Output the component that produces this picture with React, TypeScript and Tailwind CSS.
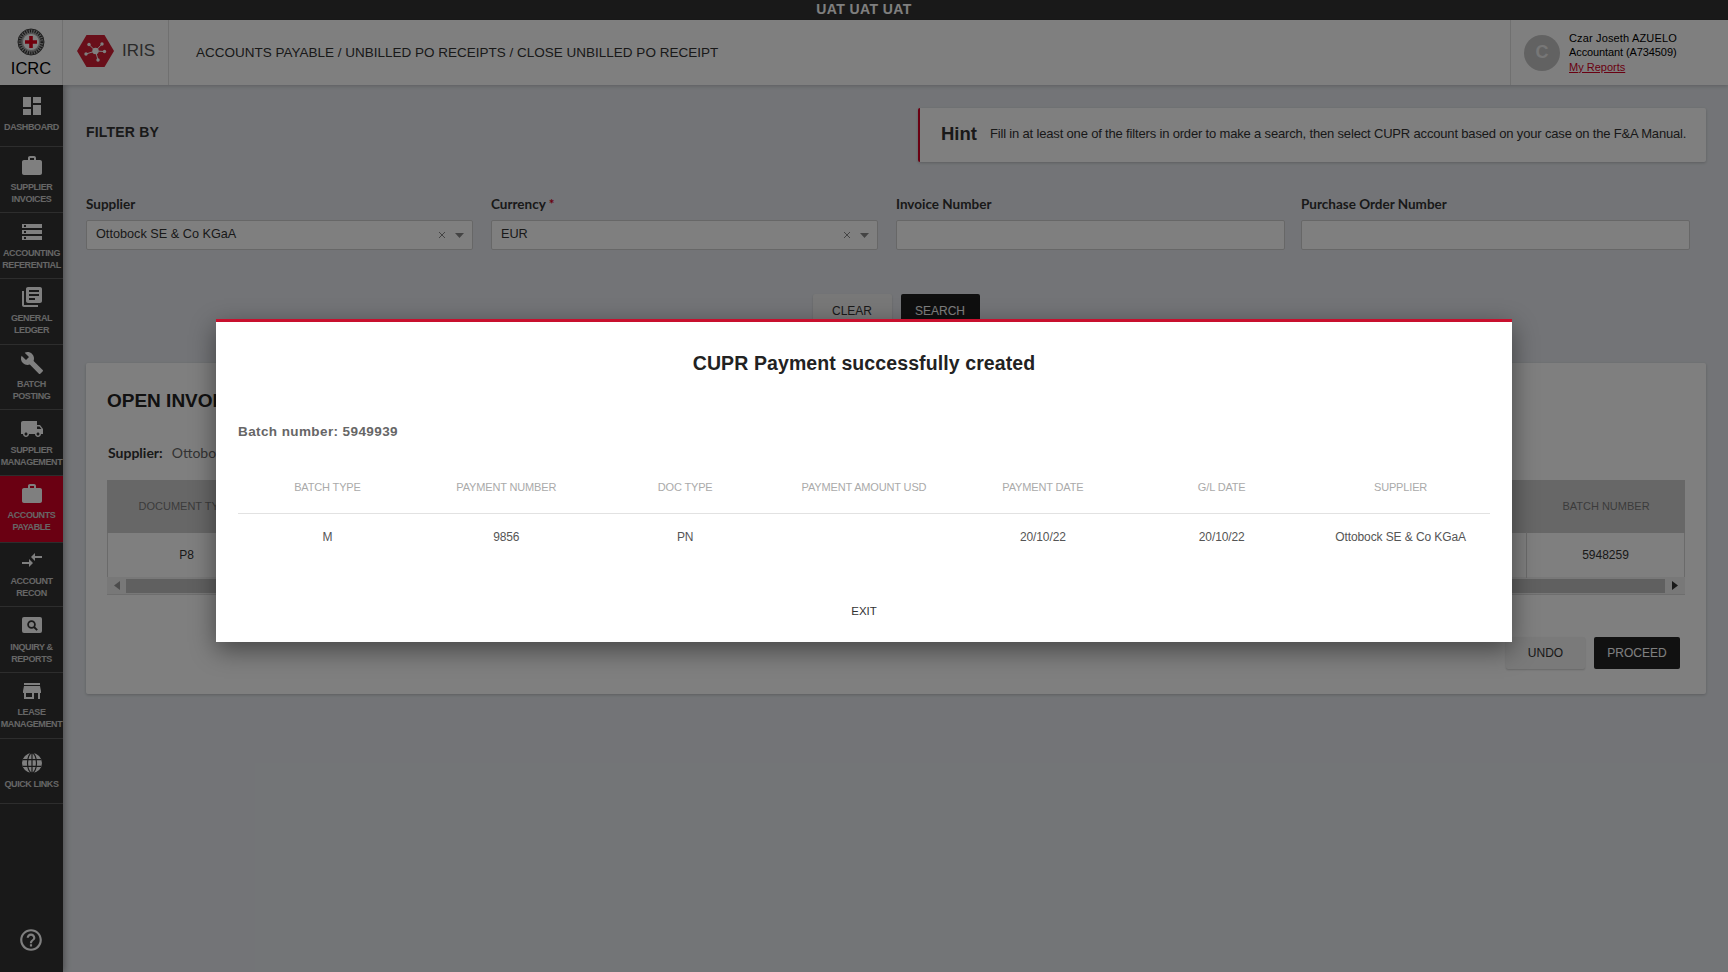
import React from "react";

const P = {
  dash: "M3 13h8V3H3v10zm0 8h8v-6H3v6zm10 0h8V11h-8v10zm0-18v6h8V3h-8z",
  work: "M20 6h-4V4c0-1.11-.89-2-2-2h-4c-1.11 0-2 .89-2 2v2H4c-1.11 0-1.99.89-1.99 2L2 19c0 1.11.89 2 2 2h16c1.11 0 2-.89 2-2V8c0-1.11-.89-2-2-2zm-6 0h-4V4h4v2z",
  storage: "M2 20h20v-4H2v4zm2-3h2v2H4v-2zM2 4v4h20V4H2zm4 3H4V5h2v2zm-4 7h20v-4H2v4zm2-3h2v2H4v-2z",
  books: "M4 6H2v14c0 1.1.9 2 2 2h14v-2H4V6zm16-4H8c-1.1 0-2 .9-2 2v12c0 1.1.9 2 2 2h12c1.1 0 2-.9 2-2V4c0-1.1-.9-2-2-2zm-1 9H9V9h10v2zm-4 4H9v-2h6v2zm4-8H9V5h10v2z",
  build: "M22.7 19l-9.1-9.1c.9-2.3.4-5-1.5-6.9-2-2-5-2.4-7.4-1.3L9 6 6 9 1.6 4.7C.4 7.1.9 10.1 2.9 12.1c1.9 1.9 4.6 2.4 6.9 1.5l9.1 9.1c.4.4 1 .4 1.4 0l2.3-2.3c.5-.4.5-1.1.1-1.4z",
  truck: "M20 8h-3V4H3c-1.1 0-2 .9-2 2v11h2c0 1.66 1.34 3 3 3s3-1.34 3-3h6c0 1.66 1.34 3 3 3s3-1.34 3-3h2v-5l-3-4zM6 18.5c-.83 0-1.5-.67-1.5-1.5s.67-1.5 1.5-1.5 1.5.67 1.5 1.5-.67 1.5-1.5 1.5zm13.5-9l1.96 2.5H17V9.5h2.5zm-1.5 9c-.83 0-1.5-.67-1.5-1.5s.67-1.5 1.5-1.5 1.5.67 1.5 1.5-.67 1.5-1.5 1.5z",
  compare: "M9.01 14H2v2h7.01v3L13 15l-3.99-4v3zm5.98-1v-3H22V8h-7.01V5L11 9l3.99 4z",
  store: "M20 4H4v2h16V4zm1 10v-2l-1-5H4l-1 5v2h1v6h10v-6h4v6h2v-6h1zm-9 4H6v-4h6v4z",
  help: "M11 18h2v-2h-2v2zm1-16C6.48 2 2 6.48 2 12s4.48 10 10 10 10-4.48 10-10S17.52 2 12 2zm0 18c-4.41 0-8-3.59-8-8s3.59-8 8-8 8 3.59 8 8-3.59 8-8 8zm0-14c-2.21 0-4 1.79-4 4h2c0-1.1.9-2 2-2s2 .9 2 2c0 2-3 1.75-3 5h2c0-2.25 3-2.5 3-5 0-2.21-1.79-4-4-4z",
};

function MI({ d, size = 24 }: { d: string; size?: number }) {
  return (
    <svg width={size} height={size} viewBox="0 0 24 24" fill="#ffffff">
      <path d={d} />
    </svg>
  );
}

function InquiryIcon() {
  return (
    <svg width={24} height={24} viewBox="0 0 24 24">
      <rect x="2" y="3" width="20" height="16" rx="2" fill="#fff" />
      <circle cx="11.5" cy="10.5" r="3.4" fill="none" stroke="#333" strokeWidth="1.8" />
      <path d="M14 13l3.2 3.2" stroke="#333" strokeWidth="1.9" />
    </svg>
  );
}

function GlobeIcon() {
  return (
    <svg width={24} height={24} viewBox="0 0 24 24">
      <circle cx="12" cy="12" r="10" fill="#fff" />
      <g fill="none" stroke="#333" strokeWidth="1.2">
        <ellipse cx="12" cy="12" rx="4.5" ry="10" />
        <path d="M12 2v20M2.6 8.6h18.8M2.6 15.4h18.8" />
      </g>
    </svg>
  );
}

const nav: { icon: React.ReactNode; lines: string[]; cls: string; active?: boolean }[] = [
  { icon: <MI d={P.dash} />, lines: ["DASHBOARD"], cls: "h-[62px] pt-[9px]" },
  { icon: <MI d={P.work} />, lines: ["SUPPLIER", "INVOICES"], cls: "h-[66px] pt-[7px]" },
  { icon: <MI d={P.storage} />, lines: ["ACCOUNTING", "REFERENTIAL"], cls: "h-[66px] pt-[7px]" },
  { icon: <MI d={P.books} />, lines: ["GENERAL", "LEDGER"], cls: "h-[66px] pt-[6px]" },
  { icon: <MI d={P.build} />, lines: ["BATCH", "POSTING"], cls: "h-[65px] pt-[6px]" },
  { icon: <MI d={P.truck} />, lines: ["SUPPLIER", "MANAGEMENT"], cls: "h-[66px] pt-[7px]" },
  { icon: <MI d={P.work} />, lines: ["ACCOUNTS", "PAYABLE"], cls: "h-[67px] pt-[6px]", active: true },
  { icon: <MI d={P.compare} />, lines: ["ACCOUNT", "RECON"], cls: "h-[64px] pt-[5px]" },
  { icon: <InquiryIcon />, lines: ["INQUIRY &", "REPORTS"], cls: "h-[66px] pt-[7px]" },
  { icon: <MI d={P.store} />, lines: ["LEASE", "MANAGEMENT"], cls: "h-[66px] pt-[6px]" },
  { icon: <GlobeIcon />, lines: ["QUICK LINKS"], cls: "h-[65px] pt-[12px]" },
];

function Sidebar() {
  return (
    <aside className="relative flex w-[63px] shrink-0 flex-col overflow-hidden bg-[#333333] shadow-[2px_0_6px_rgba(0,0,0,0.3)]">
      {nav.map((n) => (
        <div
          key={n.lines.join()}
          className={`${n.cls} flex flex-col items-center border-b border-[#5a5a5a] ${n.active ? "bg-[#d50025]" : ""}`}
        >
          {n.icon}
          <div className="mt-[4px] whitespace-nowrap text-center text-[9px] font-bold leading-[11.5px] tracking-[-0.4px] text-[#cccccc]">
            {n.lines.map((l) => (
              <div key={l}>{l}</div>
            ))}
          </div>
        </div>
      ))}
      <div className="mt-auto flex justify-center pb-[19px] pr-[2px]">
        <MI d={P.help} size={26} />
      </div>
    </aside>
  );
}

function IcrcLogo() {
  return (
    <svg width={28} height={28} viewBox="0 0 28 28">
      <circle cx="14" cy="14" r="13" fill="#aaa" stroke="#444" strokeWidth="1" />
      <circle cx="14" cy="14" r="11" fill="none" stroke="#333" strokeWidth="3" strokeDasharray="1.2 1.2" />
      <circle cx="14" cy="14" r="8" fill="#fff" />
      <path d="M12.200 8h3.600v4.200H20v3.600h-4.200V20h-3.600v-4.200H8v-3.600h4.200z" fill="#e2001a" />
    </svg>
  );
}

function IrisLogo() {
  return (
    <svg width={37} height={32} viewBox="0 0 37 32">
      <path d="M9.500 0h18L37 16l-9.500 16h-18L0 16z" fill="#d21f34" />
      <g stroke="#fff" strokeWidth="1">
        <path d="M18.500 16L9 19M18.500 16L12 9.500M18.500 16L25 9M18.500 16l9 0.500M18.500 16L21 25" />
      </g>
      <g fill="#fff">
        <circle cx="18.500" cy="16" r="3.200" />
        <circle cx="9" cy="19" r="1.700" />
        <circle cx="12" cy="9.500" r="1.700" />
        <circle cx="25" cy="9" r="1.700" />
        <circle cx="27.500" cy="16.500" r="1.700" />
        <circle cx="21" cy="25" r="1.700" />
      </g>
    </svg>
  );
}

function Header() {
  return (
    <header className="relative z-10 flex h-[65px] shrink-0 items-stretch bg-white shadow-[0_1px_4px_rgba(0,0,0,0.2)]">
      <div className="flex w-[63px] flex-col items-center border-r border-[#e0e0e0] pt-[8px]">
        <IcrcLogo />
        <div className="mt-[2px] text-[16.500px] leading-[20px] text-black">ICRC</div>
      </div>
      <div className="flex w-[106px] items-center gap-[8px] border-r border-[#e0e0e0] pb-[3px] pl-[14px]">
        <IrisLogo />
        <span className="text-[17px] font-light text-[#555]">IRIS</span>
      </div>
      <div className="flex flex-1 items-center pl-[27px] pt-[1px] text-[13.500px] text-[#333]">
        ACCOUNTS PAYABLE / UNBILLED PO RECEIPTS / CLOSE UNBILLED PO RECEIPT
      </div>
      <div className="flex w-[218px] items-center border-l border-[#e0e0e0] pl-[13px]">
        <div className="flex h-[36px] w-[36px] items-center justify-center rounded-full bg-[#c4c4c4] text-[18px] font-bold text-[#eee]">
          C
        </div>
        <div className="ml-[9px] text-[11px] leading-[14.500px] text-black">
          <div className="tracking-[0.15px]">Czar Joseth AZUELO</div>
          <div className="tracking-[-0.1px]">Accountant (A734509)</div>
          <div className="text-[#d50025] underline">My Reports</div>
        </div>
      </div>
    </header>
  );
}

function Field({ label, value, req, select, w }: { label: string; value?: string; req?: boolean; select?: boolean; w: string }) {
  return (
    <div className={w}>
      <div className="mb-[7px] text-[13.500px] font-bold leading-[17px] text-[#333]" style={{ fontFamily: 'Lato, sans-serif' }}>
        {label}
        {req && <span className="text-[#d50025]"> *</span>}
      </div>
      <div className="flex h-[30px] items-center rounded-[2px] border border-[#cfcfcf] bg-white pl-[9px] pr-[8px] text-[12.700px] text-[#333]">
        <span className="flex-1">{value}</span>
        {select && (
          <>
            <svg width="8" height="8" viewBox="0 0 8 8" className="mr-[9px]">
              <path d="M1 1l6 6M7 1L1 7" stroke="#888" strokeWidth="1" />
            </svg>
            <svg width="9" height="5" viewBox="0 0 9 5">
              <path d="M0 0h9L4.500 5z" fill="#888" />
            </svg>
          </>
        )}
      </div>
    </div>
  );
}

function Main() {
  return (
    <main className="flex-1 bg-[#e6e9ee] pl-[23px] pr-[22px] pt-[23px]">
      <div className="flex h-[54px] items-start justify-between">
        <div className="pt-[14px] text-[14px] font-bold tracking-[0.2px] text-[#333]">FILTER BY</div>
        <div className="flex h-[54px] w-[788px] items-center rounded-[2px] border-l-2 border-[#d50025] bg-white pb-[2px] pl-[21px] shadow-[0_1px_3px_rgba(0,0,0,0.2)]">
          <span className="mr-[13px] text-[18.500px] font-bold text-[#333]">Hint</span>
          <span className="text-[13px] tracking-[-0.17px] text-[#333]">
            Fill in at least one of the filters in order to make a search, then select CUPR account based on your case on the F&amp;A Manual.
          </span>
        </div>
      </div>
      <div className="mt-[34px] flex">
        <Field w="w-[387px]" label="Supplier" value="Ottobock SE & Co KGaA" select />
        <Field w="ml-[18px] w-[387px]" label="Currency" value="EUR" req select />
        <Field w="ml-[18px] w-[389px]" label="Invoice Number" />
        <Field w="ml-[16px] w-[389px]" label="Purchase Order Number" />
      </div>
      <div className="mt-[44px] flex justify-center gap-[9px]">
        <button className="h-[34px] w-[79px] rounded-[2px] bg-[#f0f0f0] text-[12px] text-[#333] shadow-[0_1px_2px_rgba(0,0,0,0.2)]">CLEAR</button>
        <button className="h-[34px] w-[79px] rounded-[2px] bg-[#1f1f1f] text-[12px] text-white">SEARCH</button>
      </div>
      <section className="mt-[35px] h-[331px] rounded-[2px] bg-white px-[21px] pt-[26px] shadow-[0_1px_3px_rgba(0,0,0,0.2)]">
        <h2 className="text-[19px] font-bold leading-[24px] text-[#222]">OPEN INVOICES</h2>
        <div className="mt-[31px] pl-[1px] text-[14px] leading-[18px]" style={{ fontFamily: 'Lato, sans-serif' }}>
          <span className="font-bold text-[#333]">Supplier:</span>
          <span className="ml-[9px] text-[#666]">Ottobock SE &amp; Co KGaA</span>
        </div>
        <div className="mt-[18px] w-full">
          <div className="flex h-[53px] items-center justify-between bg-[#cfcfcf] text-[11px] text-[#777]">
            <span className="w-[158px] text-center">DOCUMENT TYPE</span>
            <span className="w-[158px] text-center">BATCH NUMBER</span>
          </div>
          <div className="flex h-[44px] items-center justify-between border-x border-[#d4d4d4] text-[12px] text-[#333]">
            <span className="w-[158px] border-r border-[#d4d4d4] py-[14px] text-center">P8</span>
            <span className="w-[158px] border-l border-[#d4d4d4] py-[14px] text-center">5948259</span>
          </div>
          <div className="flex h-[18px] items-center border-b border-[#ddd] bg-[#f0f0f0]">
            <svg width="6" height="9" viewBox="0 0 6 9" className="ml-[7px] mr-[6px]">
              <path d="M6 0v9L0 4.500z" fill="#999" />
            </svg>
            <div className="h-[14px] flex-1 bg-[#c0c0c0]" />
            <svg width="6" height="9" viewBox="0 0 6 9" className="ml-[7px] mr-[7px]">
              <path d="M0 0v9l6-4.500z" fill="#333" />
            </svg>
          </div>
        </div>
        <div className="mt-[42px] flex justify-end gap-[9px] pr-[5px]">
          <button className="h-[32px] w-[79px] rounded-[2px] bg-[#f4f4f4] text-[12px] text-[#333] shadow-[0_1px_2px_rgba(0,0,0,0.2)]">UNDO</button>
          <button className="h-[32px] w-[86px] rounded-[2px] bg-[#222] text-[12px] text-white">PROCEED</button>
        </div>
      </section>
    </main>
  );
}

const cols = [
  ["BATCH TYPE", "M"],
  ["PAYMENT NUMBER", "9856"],
  ["DOC TYPE", "PN"],
  ["PAYMENT AMOUNT USD", ""],
  ["PAYMENT DATE", "20/10/22"],
  ["G/L DATE", "20/10/22"],
  ["SUPPLIER", "Ottobock SE & Co KGaA"],
];

function Modal() {
  return (
    <div className="absolute inset-0 z-20 bg-black/50">
      <div className="absolute left-[216px] top-[319px] flex h-[323px] w-[1296px] flex-col border-t-[3px] border-[#c8102e] bg-white px-[22px] shadow-[0_8px_24px_rgba(0,0,0,0.45)]">
        <h1 className="pt-[29px] text-center text-[19.500px] font-bold leading-[24px] tracking-[0.1px] text-[#222]">
          CUPR Payment successfully created
        </h1>
        <div className="mt-[48px] text-[13.500px] font-bold leading-[18px] tracking-[0.4px] text-[#666]">Batch number: 5949939</div>
        <div className="mt-[38px] grid grid-cols-7 border-b border-[#e2e2e2] pb-[18px] text-center text-[11px] leading-[16px] tracking-[-0.15px] text-[#aaa]">
          {cols.map((c) => (
            <div key={c[0]}>{c[0]}</div>
          ))}
        </div>
        <div className="mt-[15px] grid grid-cols-7 text-center text-[12px] leading-[16px] tracking-[-0.1px] text-[#555]">
          {cols.map((c) => (
            <div key={c[0]}>{c[1]}</div>
          ))}
        </div>
        <div className="mt-[58px] text-center text-[11.500px] leading-[16px] text-[#333]">EXIT</div>
      </div>
    </div>
  );
}

export default function App() {
  return (
    <div className="relative flex h-screen w-full flex-col overflow-hidden" style={{ fontFamily: '"Liberation Sans", Arial, sans-serif' }}>
      <div className="flex h-[20px] shrink-0 items-center justify-center bg-[#333] pb-[2px] text-[14px] font-bold tracking-[0.4px] text-white">
        UAT UAT UAT
      </div>
      <Header />
      <div className="flex min-h-0 flex-1">
        <Sidebar />
        <Main />
      </div>
      <Modal />
    </div>
  );
}
